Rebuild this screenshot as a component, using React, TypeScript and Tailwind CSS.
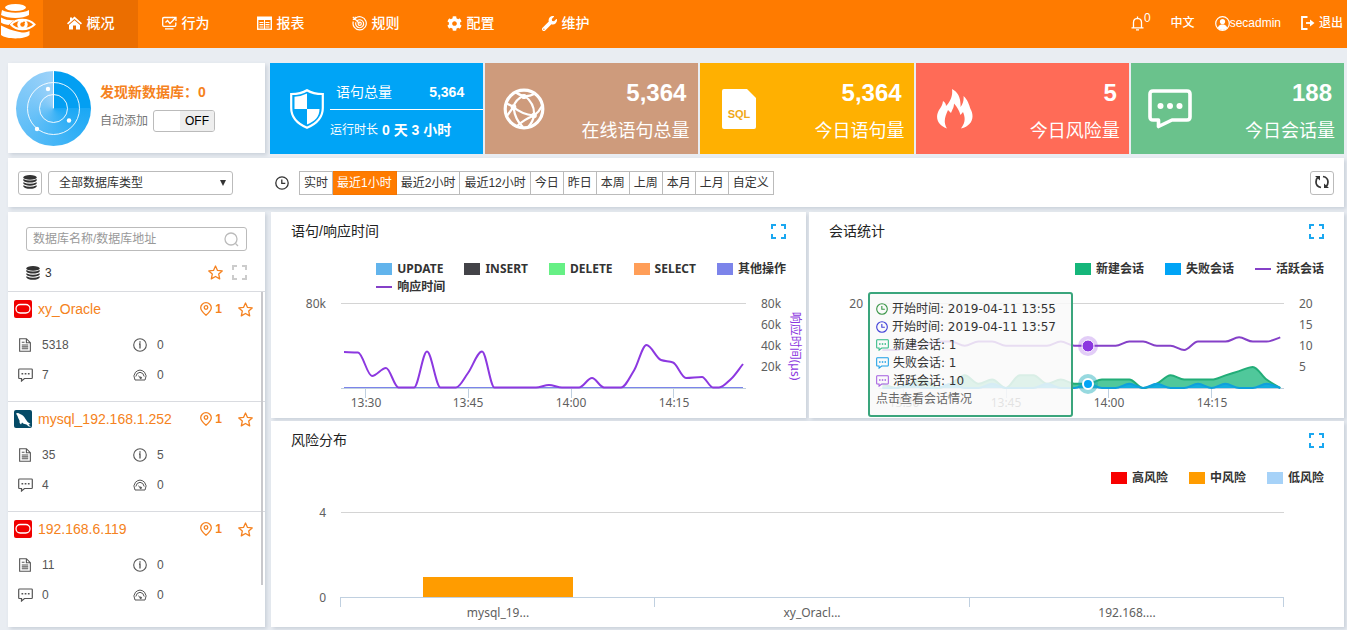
import { useState, type ReactNode } from "react";
import { FaCog, FaWrench } from "react-icons/fa";

type Point = [number, number];
type IconProps = { className?: string };

/* ---------- curve helpers ---------- */

function spline(points: Point[]): string {
  const n = points.length;
  const slope = points.slice(1).map((p, i) => (p[1] - points[i][1]) / (p[0] - points[i][0]));
  const tangent = points.map((_, i) => {
    if (i === 0) return slope[0];
    if (i === n - 1) return slope[n - 2];
    const a = slope[i - 1];
    const b = slope[i];
    return a * b <= 0 ? 0 : (2 * a * b) / (a + b);
  });
  let d = `M${points[0][0]} ${points[0][1]}`;
  for (let i = 0; i < n - 1; i++) {
    const [x0, y0] = points[i];
    const [x1, y1] = points[i + 1];
    const h = (x1 - x0) / 3;
    d += `C${x0 + h} ${y0 + tangent[i] * h} ${x1 - h} ${y1 - tangent[i + 1] * h} ${x1} ${y1}`;
  }
  return d;
}

const series = (values: number[]): Point[] =>
  values.map((v, i) => [882.4 + i * 13.72, 388 - v * 4.22]);

const area = (points: Point[]) =>
  `${spline(points)}L${points[points.length - 1][0]} 388L${points[0][0]} 388Z`;

const responseTime: Point[] = [
  [344, 352], [358, 352.5], [372, 376], [386, 368], [398.5, 387.5], [414, 387.5], [427, 351.5],
  [440.5, 387.5], [456, 387.5], [468, 373], [482, 351.5], [494.5, 387.5], [536, 387.5], [549, 385],
  [562, 387.5], [579, 387.5], [592, 378], [604, 387.5], [621, 387.5], [634, 370.5], [646.5, 345],
  [661, 360], [673, 362.5], [686, 378], [702, 377], [713, 387.5], [719, 387.5], [731, 379], [743, 364],
];
const active = series([9, 9, 10, 10, 11, 11, 10, 11, 11, 10, 10, 10, 10, 11, 10, 10, 10, 10, 11, 11, 10, 10, 9, 11, 11, 11, 12, 11, 11, 12]);
const created = series([1, 0, 1, 2, 0, 1, 3, 1, 2, 0, 3, 3, 1, 2, 1, 1, 2, 2, 2, 0, 1, 3, 2, 2, 2, 3, 4, 5, 2, 0]);
const failed = series([0, 0, 1, 0, 0, 1, 0, 0, 1, 0, 0, 0, 1, 0, 0, 1, 0, 0, 1, 0, 1, 0, 0, 1, 0, 1, 0, 0, 1, 0]);

/* ---------- icons ---------- */

function Logo() {
  return (
    <svg viewBox="0 0 36 36" className="size-9" fill="#fff" aria-label="数据库审计">
      <ellipse cx="15.500" cy="3.500" rx="10.500" ry="3.500" />
      <path d="M2 6C8 9.500 23 9.500 29 6V11C23 15 8 15 1 11Z" />
      <path d="M1 13.500C6 16.500 12 16.500 15 16C12 18 10 20 8.500 21C5 20.500 2 19.500 1 18.500Z" />
      <path d="M1 21.500C7 24.500 12 26.500 22 28.500C25 28.500 27 28 29.500 27V31C25 35.500 6 35.500 1 31Z" />
      <path d="M9.500 20.500C15 13 28 12 35.500 20.500C28 29 15 28 9.500 20.500Z" fill="#ff7b00" />
      <path d="M11 20.500C16 14.500 28 14 34.500 20.500C28 27 16 26.500 11 20.500Z" fill="none" stroke="#fff" strokeWidth="2" />
      <circle cx="22.500" cy="20.500" r="5.200" />
      <circle cx="22.500" cy="20.500" r="2.200" fill="#ff7b00" />
      <circle cx="24" cy="18.500" r="1.100" fill="#ff7b00" />
    </svg>
  );
}

function HomeIcon() {
  return (
    <svg viewBox="0 0 15 14" className="h-3.5 w-[15px]" fill="currentColor">
      <path d="M7.500 0.500L15 7.300L13.900 8.500L7.500 2.900L1.100 8.500L0 7.300L3 4.500V1.500H5V2.800Z" />
      <path d="M7.500 4.200L13 9V13.500H9V9.500H6V13.500H2V9Z" />
    </svg>
  );
}

function BehaviorIcon() {
  return (
    <svg viewBox="0 0 15 14" className="h-3.5 w-[15px]" fill="none" stroke="currentColor" strokeWidth="1.300">
      <path d="M11 1.500H2Q0.700 1.500 0.700 2.800V9Q0.700 10.300 2 10.300H12.500Q13.800 10.300 13.800 9V6.500" />
      <path d="M3 12.800H11.500M3.500 6.500L5.500 4.500L8 7.500L13.500 2M10.500 1.500H14V5" />
    </svg>
  );
}

function ReportIcon() {
  return (
    <svg viewBox="0 0 15 14" className="h-3.5 w-[15px]" fill="none" stroke="currentColor">
      <rect x="0.700" y="1.200" width="13.600" height="12" strokeWidth="1.400" />
      <path d="M0 2.500H15" strokeWidth="3" />
      <path d="M2.500 6.500H6.500M2.500 8.700H6.500M2.500 11H6.500M8.500 6.500H12.500M8.500 8.700H12.500M8.500 11H12.500" strokeWidth="1.200" />
      <path d="M7.500 4V13" />
    </svg>
  );
}

function RuleIcon() {
  return (
    <svg viewBox="0 0 15 15" className="size-[15px]" fill="none" stroke="currentColor" strokeWidth="1.200">
      <path d="M3.500 2.200A6.600 6.600 0 1 1 1.300 5.500" />
      <path d="M5.300 4.500A4 4 0 1 1 3.900 6.300M0.800 0.800L7.500 7.500M0.800 3.300L3.300 3.300L3.300 0.800" />
      <circle cx="7.700" cy="7.700" r="1.600" />
    </svg>
  );
}

function BellIcon() {
  return (
    <svg viewBox="0 0 13 15" className="h-[15px] w-[13px]" fill="none" stroke="currentColor" strokeWidth="1.300">
      <path d="M0.500 11.800H12.500M2.500 11.800V6.500Q2.500 2.500 6.500 2.300Q10.500 2.500 10.500 6.500V11.800M6.500 0.500V2.500M5 13.800H8" />
    </svg>
  );
}

function UserIcon() {
  return (
    <svg viewBox="0 0 15 15" className="size-[15px]">
      <circle cx="7.500" cy="7.500" r="6.800" fill="none" stroke="currentColor" strokeWidth="1.200" />
      <circle cx="7.500" cy="5.600" r="2.600" fill="currentColor" />
      <path d="M2.500 12Q3.500 9 6 8.500H9Q11.500 9 12.500 12Q7.500 16 2.500 12Z" fill="currentColor" />
    </svg>
  );
}

function ExitIcon() {
  return (
    <svg viewBox="0 0 14 14" className="size-3.5" fill="none" stroke="currentColor" strokeWidth="1.800">
      <path d="M6.500 1H1V13H6.500" />
      <path d="M5 7H11" />
      <path d="M9 3.500L13.500 7L9 10.500Z" fill="currentColor" stroke="none" />
    </svg>
  );
}

function DatabaseIcon() {
  return (
    <svg viewBox="0 0 14 14" className="size-3.5" fill="#333">
      <ellipse cx="7" cy="2.400" rx="6.700" ry="2.300" />
      <path d="M0.300 4Q7 7 13.700 4V5.500Q12 7.600 7 7.600T0.300 5.500Z" />
      <path d="M0.300 7.200Q7 10.200 13.700 7.200V8.600Q12 10.700 7 10.700T0.300 8.600Z" />
      <path d="M0.300 10.300Q7 13.300 13.700 10.300V11.500Q12 13.800 7 13.800T0.300 11.500Z" />
    </svg>
  );
}

function ClockIcon({ className }: IconProps) {
  return (
    <svg viewBox="0 0 14 14" className={className} fill="none" stroke="currentColor" strokeWidth="1.300">
      <circle cx="7" cy="7" r="6.200" />
      <path d="M6.800 3.500V7.300H10.300" />
    </svg>
  );
}

function RefreshIcon() {
  return (
    <svg viewBox="0 0 16 14" className="h-3.5 w-4" fill="none" stroke="#333" strokeWidth="1.700">
      <path d="M7 12.500Q2 11.500 2 7Q2 4 4 2.200M9 1.500Q14 2.500 14 7Q14 10 12 11.800" />
      <path d="M1 1H6V5.500ZM15 13H10V8.500Z" fill="#333" stroke="none" />
    </svg>
  );
}

function ExpandIcon({ className }: IconProps) {
  return (
    <svg viewBox="0 0 15 15" className={className} fill="none" stroke="currentColor" strokeWidth="2">
      <path d="M1 5V1H5M10 1H14V5M14 10V14H10M5 14H1V10" />
    </svg>
  );
}

function SearchIcon() {
  return (
    <svg viewBox="0 0 15 15" className="size-[15px] text-[#bbb]" fill="none" stroke="currentColor" strokeWidth="1.300">
      <circle cx="7" cy="7" r="6" />
      <path d="M11.500 11.500L14 14" />
    </svg>
  );
}

function StarIcon() {
  return (
    <svg viewBox="0 0 15 15" className="size-[15px]" fill="none" stroke="#f58220" strokeWidth="1.300" strokeLinejoin="round">
      <path d="M7.500 1L9.500 5.400L14.200 5.900L10.700 9.100L11.700 13.900L7.500 11.500L3.300 13.900L4.300 9.100L0.800 5.900L5.500 5.400Z" />
    </svg>
  );
}

function PinIcon() {
  return (
    <svg viewBox="0 0 12 14" className="h-3.5 w-3" fill="none" stroke="#f58220" strokeWidth="1.300">
      <path d="M6 13.200Q0.700 8.500 0.700 5.700A5.300 5 0 0 1 11.300 5.700Q11.300 8.500 6 13.200Z" />
      <circle cx="6" cy="5.500" r="1.800" />
    </svg>
  );
}

function ChatIcon({ className }: IconProps) {
  return (
    <svg viewBox="0 0 15 14" className={className} fill="none" stroke="currentColor" strokeWidth="1.200">
      <path d="M1.500 1H13.500Q14.300 1 14.300 1.800V9.700Q14.300 10.500 13.500 10.500H6.500L3.500 13V10.500H1.500Q0.700 10.500 0.700 9.700V1.800Q0.700 1 1.500 1Z" />
      <path d="M3.500 5.800H5.200M6.700 5.800H8.400M9.900 5.800H11.600" strokeWidth="1.600" />
    </svg>
  );
}

function DocIcon() {
  return (
    <svg viewBox="0 0 13 15" className="ml-px h-3.5 w-3" fill="none" stroke="#555" strokeWidth="1.200">
      <path d="M0.700 0.700H8L12.300 5V14.200H0.700ZM8 0.700V5H12.300M3 4.500H6M3 7.500H10M3 9.500H10M3 11.600H10" />
    </svg>
  );
}

function InfoIcon() {
  return (
    <svg viewBox="0 0 14 14" className="size-3.5" fill="none" stroke="#555" strokeWidth="1.100">
      <circle cx="7" cy="7" r="6.300" />
      <path d="M7 3.200V4.700M6 6H7V10.500" strokeWidth="1.300" />
    </svg>
  );
}

function GaugeIcon() {
  return (
    <svg viewBox="0 0 14 12" className="h-3 w-3.5" fill="none" stroke="#555" strokeWidth="1">
      <path d="M2 11Q-0.500 6.500 2.500 3.200Q7 -1 11.500 3.200Q14.500 6.500 12 11Z" />
      <path d="M2.800 7.500Q3.500 3.500 7 3.300Q10.500 3.500 11.200 7.500M7.500 8.800L5.300 6.800" />
      <circle cx="7.700" cy="8.800" r="0.800" fill="#555" />
    </svg>
  );
}

function OracleIcon() {
  return (
    <svg viewBox="0 0 18 18" className="size-[18px]">
      <rect width="18" height="18" rx="2" fill="#f00000" />
      <rect x="2" y="4.500" width="14" height="8.500" rx="4.200" fill="none" stroke="#fff" strokeWidth="1.300" />
    </svg>
  );
}

function MysqlIcon() {
  return (
    <svg viewBox="0 0 18 18" className="size-[18px]">
      <rect width="18" height="18" rx="2" fill="#054a66" />
      <path d="M2 3.500Q4 2.500 6 4Q9.500 5 11.500 9Q12.500 11.500 16.500 14Q15 14 14.500 14.500L17 17Q14 16.500 12.500 14.500Q9 14 8 12.500L7 14.500Q5 13 5.500 10.500Q4 8 3.500 6Z" fill="#fff" />
    </svg>
  );
}

function ShieldIcon() {
  return (
    <svg viewBox="0 0 34 40" className="h-10 w-[34px] shrink-0">
      <path d="M17 1.200Q11 5 1.200 5V19C1.200 29 7 34.500 17 38.800C27 34.500 32.800 29 32.800 19V5Q23 5 17 1.200Z" fill="none" stroke="#fff" strokeWidth="2.200" />
      <path d="M17 4.500Q11 7.500 4.500 7.800V20H17ZM17 20H29.500C29.500 28 25 32 17 35.500Z" fill="#fff" />
    </svg>
  );
}

function NetworkIcon() {
  return (
    <svg viewBox="0 0 42 42" className="size-[42px]" fill="none" stroke="#fff" strokeWidth="2.200">
      <circle cx="21" cy="21" r="18.800" strokeWidth="3.200" />
      <path d="M13 4.500Q22 11 31 6M20 8Q12 12 10.500 19Q6 25 4 28M10.500 19Q18 26 31 27.500M10.500 19Q12 32 20 39M22 8Q32 16 31 27.500M31 27.500Q30 34 25 39M31 27.500Q22 31 14 38M31 27.500Q36 24 39 18M3 15L10.500 19" />
      <circle cx="10.500" cy="19" r="2.800" fill="#fff" stroke="none" />
      <circle cx="31" cy="27.500" r="2.800" fill="#fff" stroke="none" />
      <circle cx="21" cy="8.500" r="2.600" fill="#fff" stroke="none" />
    </svg>
  );
}

function SqlIcon() {
  return (
    <svg viewBox="0 0 34 40" className="h-10 w-[34px]">
      <path d="M2 0H25L34 9V38Q34 40 32 40H2Q0 40 0 38V2Q0 0 2 0Z" fill="#fff" />
      <text x="17" y="29" textAnchor="middle" fill="#f0a818" fontFamily="'Liberation Sans',sans-serif" fontWeight="700" fontSize="11">SQL</text>
    </svg>
  );
}

function FireIcon() {
  return (
    <svg viewBox="0 0 36 40" className="h-10 w-9" fill="#fff">
      <path d="M15 0C21 3 24 9 23.500 18C26 15 27 11 26.500 7C31 11 32 16 33.500 20C38 28 35 37 24 39.500C29 33 28 28 26 23L23.500 26C22 21 20 18 17 14.500C17 19 15 21 14 24L11 21C8 28 6 33 10 39.500C0 36 -2 28 2 21C4 18 5.500 16 6 12C8 13 9 15 9 17C13 13 16 7 15 0Z" />
    </svg>
  );
}

function BigChatIcon() {
  return (
    <svg viewBox="0 0 44 40" className="h-10 w-11" fill="none" stroke="#fff" strokeWidth="3.600" strokeLinejoin="round">
      <path d="M5 2H39Q42 2 42 5V28Q42 31 39 31H24L10.500 37.500V31H5Q2 31 2 28V5Q2 2 5 2Z" />
      <g fill="#fff" stroke="none">
        <circle cx="12.500" cy="17" r="3" />
        <circle cx="22" cy="17" r="3" />
        <circle cx="31.500" cy="17" r="3" />
      </g>
    </svg>
  );
}

/* ---------- header ---------- */

const navItems: { label: string; icon: ReactNode }[] = [
  { label: "概况", icon: <HomeIcon /> },
  { label: "行为", icon: <BehaviorIcon /> },
  { label: "报表", icon: <ReportIcon /> },
  { label: "规则", icon: <RuleIcon /> },
  { label: "配置", icon: <FaCog className="size-[15px]" /> },
  { label: "维护", icon: <FaWrench className="size-[15px]" /> },
];

function Header() {
  return (
    <header className="flex h-12 items-stretch bg-[#ff7b00] text-white">
      <div className="w-[43px] pt-1">
        <Logo />
      </div>
      <nav className="flex">
        {navItems.map((item, i) => (
          <a
            key={item.label}
            href="#"
            className={`flex w-[95px] items-center justify-center gap-[5px] pb-[2px] text-sm font-medium ${i === 0 ? "bg-[#eb6e00]" : ""}`}
          >
            {item.icon}
            {item.label}
          </a>
        ))}
      </nav>
      <div className="ml-auto flex items-center gap-5 pb-[2px] pr-1 text-xs font-medium">
        <a href="#" className="flex items-center" aria-label="通知">
          <BellIcon />
          <span className="pb-2.5">0</span>
        </a>
        <a href="#">中文</a>
        <a href="#" className="flex items-center">
          <UserIcon />
          secadmin
        </a>
        <a href="#" className="flex items-center gap-1">
          <ExitIcon />
          退出
        </a>
      </div>
    </header>
  );
}

/* ---------- summary row ---------- */

function Discovery() {
  const [on, setOn] = useState(false);
  return (
    <section className="mb-px flex w-[257px] shrink-0 items-center gap-[9px] bg-white pl-2 shadow-[2px_2px_4px_#c9d0d9]">
      <div className="size-[75px] rounded-full bg-[conic-gradient(#039ff2_0deg,#039ff2_90deg,#1ba8f5_90deg,#9dd2f9_360deg)]">
        <svg viewBox="0 0 75 75" className="size-[75px]" fill="none" stroke="#fff">
          <circle cx="37.500" cy="37.500" r="26" strokeOpacity="0.900" />
          <circle cx="37.500" cy="37.500" r="14" strokeOpacity="0.900" />
          <path d="M37.500 0V37.500" />
          <g fill="#fff" stroke="none">
            <circle cx="32" cy="18" r="2.200" />
            <circle cx="53" cy="49.500" r="2.200" />
            <circle cx="21" cy="58" r="2.200" />
          </g>
        </svg>
      </div>
      <div className="flex flex-col gap-2 pb-[3px]">
        <h2 className="text-sm font-bold leading-5 text-[#f58220]">发现新数据库：0</h2>
        <div className="flex items-center gap-[5px] text-xs text-[#777]">
          <span id="auto-add">自动添加</span>
          <button
            type="button"
            role="switch"
            aria-checked={on}
            aria-labelledby="auto-add"
            onClick={() => setOn(!on)}
            className="flex h-[22px] w-[62px] overflow-hidden rounded-[3px] border border-[#bbb] bg-white"
          >
            <span className="w-[26px]" />
            <span className="flex h-full flex-1 items-center justify-center bg-[#eee] text-xs text-black">
              {on ? "ON" : "OFF"}
            </span>
          </button>
        </div>
      </div>
    </section>
  );
}

function Tile({ color, icon, value, label }: { color: string; icon: ReactNode; value: string; label: string }) {
  return (
    <section className={`flex items-center justify-between pl-[17px] pr-[9px] text-white ${color}`}>
      <span className="flex w-11 justify-center">{icon}</span>
      <div className="flex flex-col items-end gap-1.5 pt-[7px]">
        <strong className="pr-[3px] text-2xl leading-8">{value}</strong>
        <span className="text-lg leading-8">{label}</span>
      </div>
    </section>
  );
}

function Summary() {
  return (
    <div className="flex gap-[5px]">
      <Discovery />
      <div className="grid h-[91px] flex-1 grid-cols-5 gap-[2px]">
        <section className="flex items-center gap-[6px] bg-[#00a4f6] pl-5 text-white">
          <ShieldIcon />
          <div className="flex-1 self-stretch">
            <div className="flex h-[47px] items-center justify-between border-b border-white pl-1.5 pr-[19px] pt-3 text-sm">
              <span>语句总量</span>
              <strong>5,364</strong>
            </div>
            <div className="flex h-10 items-center gap-1 whitespace-nowrap text-xs">
              运行时长<strong className="text-sm">0 天 3 小时</strong>
            </div>
          </div>
        </section>
        <Tile color="bg-[#ce9b7c]" icon={<NetworkIcon />} value="5,364" label="在线语句总量" />
        <Tile color="bg-[#ffb001]" icon={<SqlIcon />} value="5,364" label="今日语句量" />
        <Tile color="bg-[#ff6b57]" icon={<FireIcon />} value="5" label="今日风险量" />
        <Tile color="bg-[#6ac28c]" icon={<BigChatIcon />} value="188" label="今日会话量" />
      </div>
    </div>
  );
}

/* ---------- filter bar ---------- */

const ranges = ["实时", "最近1小时", "最近2小时", "最近12小时", "今日", "昨日", "本周", "上周", "本月", "上月", "自定义"];

function FilterBar() {
  const [range, setRange] = useState("最近1小时");
  return (
    <div className="flex h-[49px] items-center bg-white px-2.5 text-xs text-[#333] shadow-[2px_2px_4px_#c9d0d9]">
      <button type="button" aria-label="数据库" className="flex size-6 items-center justify-center rounded-[3px] border border-[#bbb] pb-[2px]">
        <DatabaseIcon />
      </button>
      <div className="relative ml-1.5">
        <select aria-label="数据库类型" className="h-6 w-[185px] appearance-none rounded-[3px] border border-[#bbb] bg-white pl-2.5">
          <option>全部数据库类型</option>
        </select>
        <svg viewBox="0 0 6 6" className="pointer-events-none absolute right-[7px] top-[9px] size-1.5" fill="#333">
          <path d="M0 0H6L3 6Z" />
        </svg>
      </div>
      <ClockIcon className="ml-[42px] mr-2.5 size-3.5" />
      <div className="flex">
        {ranges.map((r, i) => (
          <button
            key={r}
            type="button"
            onClick={() => setRange(r)}
            className={`h-6 border-y border-r px-1 ${i === 0 ? "border-l" : ""} ${
              r === range ? "border-[#f57600] bg-[#ff7b00] text-white" : "border-[#bbb]"
            }`}
          >
            {r}
          </button>
        ))}
      </div>
      <button type="button" aria-label="刷新" className="ml-auto flex size-6 items-center justify-center rounded-[3px] border border-[#bbb] pb-[2px]">
        <RefreshIcon />
      </button>
    </div>
  );
}

/* ---------- sidebar ---------- */

const databases = [
  { name: "xy_Oracle", icon: <OracleIcon />, docs: 5318, info: 0, chats: 7, load: 0 },
  { name: "mysql_192.168.1.252", icon: <MysqlIcon />, docs: 35, info: 5, chats: 4, load: 0 },
  { name: "192.168.6.119", icon: <OracleIcon />, docs: 11, info: 0, chats: 0, load: 0 },
];

function Stat({ icon, value }: { icon: ReactNode; value: number }) {
  return (
    <div className="flex items-center">
      <span className="w-6">{icon}</span>
      {value}
    </div>
  );
}

function Sidebar() {
  return (
    <aside className="relative w-[257px] shrink-0 bg-white shadow-[2px_2px_4px_#c9d0d9]">
      <div className="px-[18px] pt-[15px]">
        <div className="flex h-6 items-center rounded-[3px] border border-[#bbb] pl-1.5 pr-[7px]">
          <input
            aria-label="搜索数据库"
            placeholder="数据库名称/数据库地址"
            className="w-full min-w-0 flex-1 text-xs outline-none placeholder:text-[#999]"
          />
          <SearchIcon />
        </div>
        <div className="flex h-10 items-center pt-[3px] text-xs text-[#333]">
          <DatabaseIcon />
          <span className="ml-[5px]">3</span>
          <button type="button" aria-label="收藏" className="ml-auto mr-[9px]">
            <StarIcon />
          </button>
          <button type="button" aria-label="展开">
            <ExpandIcon className="size-[15px] text-[#ccc]" />
          </button>
        </div>
      </div>
      <ul>
        {databases.map((db) => (
          <li key={db.name} className="h-[110px] border-t border-[#d9dbe0] text-xs text-[#555]">
            <div className="flex h-[34px] items-center pl-1.5 pr-3">
              {db.icon}
              <a href="#" className="ml-1.5 text-sm text-[#f58220]">{db.name}</a>
              <span className="ml-auto flex items-center gap-[3px] font-bold text-[#f58220]">
                <PinIcon />1
              </span>
              <button type="button" aria-label="收藏" className="ml-4">
                <StarIcon />
              </button>
            </div>
            <div className="mt-1 grid grid-cols-[115px_1fr] pl-2.5 leading-[30px]">
              <Stat icon={<DocIcon />} value={db.docs} />
              <Stat icon={<InfoIcon />} value={db.info} />
              <Stat icon={<ChatIcon className="h-3.5 w-[15px]" />} value={db.chats} />
              <Stat icon={<GaugeIcon />} value={db.load} />
            </div>
          </li>
        ))}
      </ul>
      <div className="absolute right-[2px] top-20 h-[293px] w-[2px] bg-[#c8c8cc]" />
    </aside>
  );
}

/* ---------- charts ---------- */

const chartFont = "font-['Noto_Sans','Noto_Sans_CJK_SC',sans-serif]";

function Card({ title, children, className }: { title: string; children: ReactNode; className: string }) {
  return (
    <section className={`relative bg-white shadow-[2px_2px_4px_#c9d0d9] ${className}`}>
      <div className="mb-2.5 flex h-[38px] items-center justify-between px-5">
        <h2 className="text-sm text-[#222]">{title}</h2>
        <button type="button" aria-label="全屏">
          <ExpandIcon className="size-[15px] text-[#1aa7f0]" />
        </button>
      </div>
      {children}
    </section>
  );
}

function Legend({ color, label, line }: { color: string; label: string; line?: boolean }) {
  return (
    <span className="flex h-[18px] items-center gap-[5px] whitespace-nowrap">
      <span className={`w-4 ${line ? "h-[2px]" : "h-3"} ${color}`} />
      {label}
    </span>
  );
}

const legendText = `text-xs font-bold text-[#333] ${chartFont}`;

function ResponseChart() {
  return (
    <Card title="语句/响应时间" className="min-w-0">
      <div className={`ml-auto mr-5 w-fit ${legendText}`}>
        <div className="flex gap-[21px]">
          <Legend color="bg-[#62b4ec]" label="UPDATE" />
          <Legend color="bg-[#434348]" label="INSERT" />
          <Legend color="bg-[#66f085]" label="DELETE" />
          <Legend color="bg-[#ff9e58]" label="SELECT" />
          <Legend color="bg-[#7c84ea]" label="其他操作" />
        </div>
        <Legend color="bg-[#8540c8]" label="响应时间" line />
      </div>
      <svg viewBox="271 296 535 122" className={`block w-full ${chartFont}`} fontSize="12" fill="#606060">
        <path d="M341 303.500H746" stroke="#d4d4d4" />
        <path d="M341 388.500H746M365.500 388V398M468.500 388V398M571.500 388V398M673.500 388V398" stroke="#c0d0e0" />
        <path d="M344 387.500H743" stroke="#7c84ea" />
        <path d={spline(responseTime)} fill="none" stroke="#8c38e0" strokeWidth="2" strokeLinejoin="round" />
        <text x="326" y="308" textAnchor="end">80k</text>
        <text x="761" y="308">80k</text>
        <text x="761" y="329">60k</text>
        <text x="761" y="350">40k</text>
        <text x="761" y="371">20k</text>
        <g textAnchor="middle">
          <text x="366" y="407">13:30</text>
          <text x="468" y="407">13:45</text>
          <text x="571" y="407">14:00</text>
          <text x="674" y="407">14:15</text>
        </g>
        <text transform="translate(791 346) rotate(90)" textAnchor="middle" fill="#8c38e0">响应时间(μs)</text>
      </svg>
    </Card>
  );
}

function SessionTooltip() {
  return (
    <div className="absolute left-[59px] top-20 w-[205px] rounded-[3px] border-2 border-[#3aa57c] bg-[#f9f9f9]/85 px-1.5 pb-[7px] pt-1.5 font-['DejaVu_Sans','Noto_Sans_CJK_SC',sans-serif] text-xs leading-[18px] text-[#333]">
      <p className="flex items-center gap-1 whitespace-nowrap"><ClockIcon className="size-3 text-[#3b9648]" />开始时间: 2019-04-11 13:55</p>
      <p className="flex items-center gap-1 whitespace-nowrap"><ClockIcon className="size-3 text-[#4040d8]" />开始时间: 2019-04-11 13:57</p>
      <p className="flex items-center gap-1"><ChatIcon className="h-3 w-[13px] text-[#2db883]" />新建会话: 1</p>
      <p className="flex items-center gap-1"><ChatIcon className="h-3 w-[13px] text-[#1a9fe6]" />失败会话: 1</p>
      <p className="flex items-center gap-1"><ChatIcon className="h-3 w-[13px] text-[#a35ce0]" />活跃会话: 10</p>
      <p className="text-[#666]">点击查看会话情况</p>
    </div>
  );
}

function SessionChart() {
  return (
    <Card title="会话统计" className="min-w-0">
      <div className={`flex h-9 justify-end gap-[21px] pr-5 ${legendText}`}>
        <Legend color="bg-[#15b67a]" label="新建会话" />
        <Legend color="bg-[#00a4f6]" label="失败会话" />
        <Legend color="bg-[#8540c8]" label="活跃会话" line />
      </div>
      <svg viewBox="809 296 535 122" className={`block w-full ${chartFont}`} fontSize="12" fill="#606060">
        <path d="M879 303.500H1284" stroke="#d4d4d4" />
        <path d="M879 388.500H1284M903.500 388V398M1006.500 388V398M1108.500 388V398M1211.500 388V398" stroke="#c0d0e0" />
        <path d={area(created)} fill="#15b67a" fillOpacity="0.750" />
        <path d={spline(created)} fill="none" stroke="#22ad78" strokeWidth="2" />
        <path d={area(failed)} fill="#00a4f6" fillOpacity="0.750" />
        <path d={spline(failed)} fill="none" stroke="#0fa0dc" strokeWidth="2" />
        <path d={spline(active)} fill="none" stroke="#8540c8" strokeWidth="2" />
        <circle cx="1088" cy="346" r="10" fill="#8c38e0" fillOpacity="0.250" />
        <circle cx="1088" cy="346" r="6" fill="#8c38e0" stroke="#fff" />
        <circle cx="1088" cy="384" r="10" fill="#18aab8" fillOpacity="0.450" />
        <circle cx="1088" cy="384" r="5" fill="#00a4f6" stroke="#fff" strokeWidth="2" />
        <text x="863" y="308" textAnchor="end">20</text>
        <text x="1299" y="308">20</text>
        <text x="1299" y="329">15</text>
        <text x="1299" y="350">10</text>
        <text x="1299" y="371">5</text>
        <g textAnchor="middle">
          <text x="904" y="407">13:30</text>
          <text x="1006" y="407">13:45</text>
          <text x="1109" y="407">14:00</text>
          <text x="1212" y="407">14:15</text>
        </g>
      </svg>
      <SessionTooltip />
    </Card>
  );
}

function RiskChart() {
  return (
    <Card title="风险分布" className="col-span-2">
      <div className={`flex justify-end gap-[21px] pr-5 ${legendText}`}>
        <Legend color="bg-[#f80000]" label="高风险" />
        <Legend color="bg-[#ff9c00]" label="中风险" />
        <Legend color="bg-[#a6d2f8]" label="低风险" />
      </div>
      <svg viewBox="271 487 1073 140" className={`block w-full ${chartFont}`} fontSize="12" fill="#606060">
        <path d="M341 512.500H1284" stroke="#d4d4d4" />
        <rect x="423" y="577" width="150" height="20" fill="#ff9c00" />
        <path d="M340 597.500H1284M340.500 597V607M654.500 597V607M969.500 597V607M1283.500 597V607" stroke="#c0d0e0" />
        <text x="326" y="517" textAnchor="end">4</text>
        <text x="326" y="602" textAnchor="end">0</text>
        <g textAnchor="middle">
          <text x="498" y="617">mysql_19...</text>
          <text x="812" y="617">xy_Oracl...</text>
          <text x="1127" y="617">192.168....</text>
        </g>
      </svg>
    </Card>
  );
}

export default function App() {
  return (
    <div className="min-h-screen bg-[#e9edf2] font-['Liberation_Sans','Noto_Sans_CJK_SC',sans-serif]">
      <Header />
      <main className="flex flex-col pb-[2px] pl-2 pr-[3px] pt-[15px]">
        <Summary />
        <div className="mb-[5px] mt-1">
          <FilterBar />
        </div>
        <div className="flex items-stretch gap-1.5">
          <Sidebar />
          <div className="grid min-w-0 flex-1 grid-cols-2 gap-[3px]">
            <ResponseChart />
            <SessionChart />
            <RiskChart />
          </div>
        </div>
      </main>
    </div>
  );
}
